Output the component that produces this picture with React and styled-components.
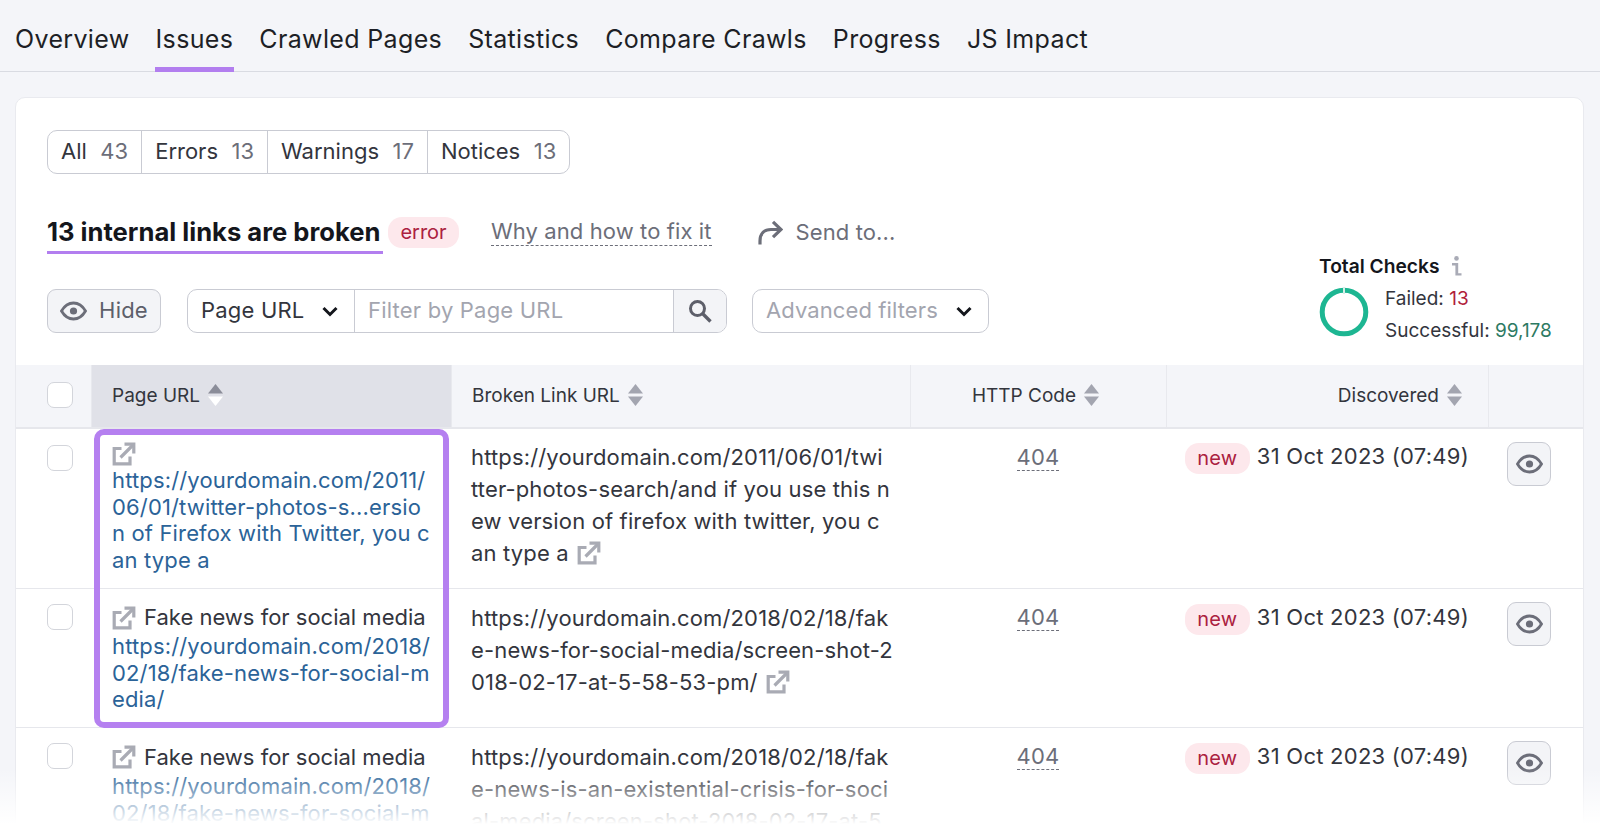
import React from 'react';
import styled, { createGlobalStyle } from 'styled-components';

const Global = createGlobalStyle`
  html, body { margin: 0; padding: 0; background: #f4f5f9; }
  * { box-sizing: border-box; }
  body { font-family: Inter, "Liberation Sans", sans-serif; color: #1d1f26; }
`;

const Page = styled.div`
  position: relative;
  width: 1600px;
  height: 840px;
  overflow: hidden;
  background: #f4f5f9;
`;
const TabBar = styled.nav`
  height: 72px;
  display: flex;
  gap: 24px;
  padding-left: 14px;
  border-bottom: 1px solid #d9dbe2;
`;
const Tab = styled.div`
  height: 72px;
  padding: 24px 1px 0;
  font-size: 25px;
  line-height: 30px;
  letter-spacing: 0.35px;
  border-bottom: 5px solid ${p => (p.$active ? '#b27eef' : 'transparent')};
`;
const Card = styled.main`
  margin: 25px 16px 0 15px;
  height: 760px;
  background: #fff;
  border: 1px solid #e9eaef;
  border-radius: 10px 10px 0 0;
`;
const Segments = styled.div`
  display: inline-flex;
  margin: 32px 0 0 31px;
  height: 44px;
  border: 1px solid #c9cbd3;
  border-radius: 10px;
`;
const Segment = styled.div`
  display: flex;
  align-items: center;
  gap: 13.5px;
  padding: 0 13px 2px;
  font-size: 22px;
  color: #33353d;
  & + & { border-left: 1px solid #c9cbd3; }
`;
const Count = styled.span`
  color: #6c6e79;
`;
const Head = styled.div`
  display: flex;
  justify-content: space-between;
  align-items: flex-end;
  padding: 0 31px;
`;
const TitleRow = styled.div`
  display: flex;
  align-items: center;
  margin-top: 36px;
  height: 44px;
`;
const Title = styled.h1`
  margin: 0;
  height: 43px;
  padding-top: 5px;
  width: 336px;
  font-size: 25.6px;
  line-height: 31px;
  font-weight: 700;
  white-space: nowrap;
  color: #14161c;
  border-bottom: 3px solid #b27eef;
`;
const Badge = styled.span`
  display: inline-flex;
  align-items: center;
  justify-content: center;
  width: ${p => p.$w}px;
  height: 31px;
  margin-top: ${p => p.$top || 0}px;
  margin-left: ${p => p.$left || 0}px;
  border-radius: 14px;
  background: #fde8ec;
  color: #ab2140;
  font-size: 20px;
  flex: none;
`;
const FixLink = styled.a`
  margin-left: 32px;
  font-size: 22px;
  letter-spacing: 0.1px;
  color: #6c6e79;
  border-bottom: 1px dashed #6c6e79;
  line-height: 27px;
`;
const SendTo = styled.div`
  display: flex;
  align-items: center;
  gap: 13px;
  margin-left: 46px;
  font-size: 22px;
  letter-spacing: 0.1px;
  color: #6c6e79;
`;
const FilterRow = styled.div`
  display: flex;
  margin-top: 35px;
  height: 44px;
`;
const GreyButton = styled.button`
  display: flex;
  align-items: center;
  justify-content: center;
  gap: 12px;
  padding: 0;
  width: ${p => p.$w}px;
  height: 44px;
  background: #f3f4f7;
  border: 1px solid #c9cbd3;
  border-radius: 9px;
  font: inherit;
  font-size: 22px;
  letter-spacing: 0.2px;
  color: #5d5f6a;
`;
const ButtonLabel = styled.span`
  margin-bottom: 2px;
`;
const FilterGroup = styled.div`
  display: flex;
  margin-left: 26px;
  width: 540px;
  height: 44px;
  border: 1px solid #c9cbd3;
  border-radius: 10px;
  overflow: hidden;
`;
const SelectPart = styled.div`
  display: flex;
  align-items: center;
  justify-content: space-between;
  width: 167px;
  padding: 0 16px 2px 13px;
  font-size: 22px;
  letter-spacing: 0.2px;
  color: #33353d;
  border-right: 1px solid #c9cbd3;
`;
const InputPart = styled.div`
  flex: 1;
  display: flex;
  align-items: center;
  padding: 0 0 2px 13px;
  font-size: 22px;
  letter-spacing: 0.2px;
  color: #a3a5af;
`;
const SearchPart = styled.div`
  width: 53px;
  display: flex;
  align-items: center;
  justify-content: center;
  background: #f3f4f7;
  border-left: 1px solid #c9cbd3;
`;
const Advanced = styled.div`
  display: flex;
  align-items: center;
  justify-content: space-between;
  margin-left: 25px;
  width: 237px;
  height: 44px;
  padding: 0 16px 2px 13px;
  border: 1px solid #c9cbd3;
  border-radius: 10px;
  font-size: 22px;
  letter-spacing: 0.1px;
  color: #a3a5af;
`;
const Checks = styled.aside`
  width: 233px;
  margin-bottom: -14px;
`;
const ChecksTitle = styled.div`
  display: flex;
  align-items: center;
  gap: 12px;
  font-size: 19.2px;
  line-height: 24px;
  font-weight: 600;
  color: #14161c;
`;
const ChecksBody = styled.div`
  display: flex;
  align-items: center;
  gap: 16px;
  margin-top: 5px;
`;
const CheckLine = styled.div`
  font-size: 19px;
  line-height: 32px;
  white-space: nowrap;
  color: #33353d;
`;
const Num = styled.span`
  color: ${p => p.$c};
`;
const Table = styled.section`
  margin-top: 32px;
`;
const cols = '75px 360px 459px 256px 322px 1fr';
const HeadRow = styled.div`
  display: grid;
  grid-template-columns: ${cols};
  height: 64px;
  background: #f4f5f9;
  border-bottom: 2px solid #e6e7ec;
`;
const HeadCell = styled.div`
  display: flex;
  align-items: center;
  justify-content: ${p => p.$justify || 'flex-start'};
  gap: 8px;
  padding: ${p => p.$pad || '0'};
  font-size: 19px;
  color: #33353d;
  background: ${p => (p.$sorted ? '#e0e1e8' : 'transparent')};
  & + & { border-left: ${p => (p.$sorted ? 'none' : '1px solid #e8e9ee')}; }
`;
const Check = styled.span`
  display: block;
  width: 26px;
  height: 26px;
  background: #fff;
  border: 1px solid #d3d5db;
  border-radius: 7px;
`;
const Row = styled.div`
  display: grid;
  grid-template-columns: ${cols};
  height: ${p => p.$h}px;
  & + & { border-top: 1px solid #e6e7ec; }
`;
const CheckCell = styled.div`
  padding: ${p => p.$top}px 0 0 31px;
`;
const PageCell = styled.div`
  padding: ${p => p.$top}px 20px 0 21px;
  font-size: 22px;
  line-height: 26.5px;
  letter-spacing: 0.15px;
`;
const PageTitle = styled.div`
  display: flex;
  align-items: center;
  gap: 8px;
  height: ${p => p.$h}px;
  white-space: nowrap;
  letter-spacing: 0;
  color: #33353d;
`;
const LinkText = styled.a`
  display: block;
  color: #2b6398;
  word-break: break-all;
`;
const BrokenCell = styled.div`
  padding: ${p => p.$top}px 0 0 20px;
  font-size: 22px;
  line-height: 32px;
  letter-spacing: 0.15px;
  color: #33353d;
  white-space: pre;
  svg { margin-left: 8px; vertical-align: -4px; }
`;
const CodeCell = styled.div`
  padding-top: ${p => p.$top}px;
  display: flex;
  justify-content: center;
  align-items: flex-start;
  font-size: 22px;
  line-height: 26px;
  letter-spacing: 0.2px;
  color: #6c6e79;
  span { border-bottom: 1px dashed #6c6e79; }
`;
const DateCell = styled.div`
  display: flex;
  justify-content: flex-end;
  align-items: flex-start;
  gap: 7px;
  padding: ${p => p.$top}px 19px 0 0;
  font-size: 22px;
  line-height: 31px;
  letter-spacing: 0.25px;
  color: #33353d;
  white-space: nowrap;
`;
const ActionCell = styled.div`
  padding: ${p => p.$top}px 0 0 19px;
`;
const Highlight = styled.div`
  position: absolute;
  left: 94px;
  top: 429px;
  width: 355px;
  height: 299px;
  border: 6px solid #b580f0;
  border-radius: 10px;
  pointer-events: none;
`;
const Fade = styled.div`
  position: absolute;
  left: 0;
  right: 0;
  bottom: 0;
  height: 72px;
  background: linear-gradient(to bottom, rgba(255,255,255,0), #fff 78%);
  pointer-events: none;
`;

const ExtIcon = ({ size = 24 }) => (
  <svg width={size} height={size} viewBox="0 0 24 24" fill="none" stroke="#a9abb4" strokeWidth="3.2" style={{ flex: 'none' }}>
    <path d="M9.5 6.5H2.2v15.3H18V14.5" />
    <path d="M8.5 15.5L21 3" />
    <path d="M12.5 2.2h9.3v9.3" />
  </svg>
);
const EyeIcon = () => (
  <svg width="27" height="20" viewBox="0 0 27 20" fill="none" style={{ flex: 'none' }}>
    <path d="M1.5 10C4.5 4.8 8.5 2 13.5 2s9 2.8 12 8c-3 5.2-7 8-12 8s-9-2.8-12-8z" stroke="#6c6e79" strokeWidth="2.8" />
    <circle cx="13.5" cy="10" r="3.6" fill="#6c6e79" />
  </svg>
);
const Chevron = () => (
  <svg width="16" height="11" viewBox="0 0 16 11" fill="none" stroke="#14161c" strokeWidth="3" style={{ flex: 'none', marginTop: 2 }}>
    <path d="M1.5 2l6.5 6.5L14.5 2" />
  </svg>
);
const SortIcon = ({ up = '#a3a5b0', down = '#a3a5b0' }) => (
  <svg width="15" height="22" viewBox="0 0 15 22" style={{ flex: 'none' }}>
    <path d="M7.5 0l7.5 9.5H0z" fill={up} />
    <path d="M7.5 22l7.5-9.5H0z" fill={down} />
  </svg>
);
const SearchIcon = () => (
  <svg width="24" height="24" viewBox="0 0 24 24" fill="none" stroke="#5d5f6a" strokeWidth="3">
    <circle cx="9.5" cy="9.5" r="7" />
    <path d="M14.5 14.5l8 8" strokeWidth="3.4" />
  </svg>
);
const SendIcon = () => (
  <svg width="25" height="25" viewBox="0 0 25 25" fill="none" stroke="#6c6e79" strokeWidth="3.2" style={{ flex: 'none' }}>
    <path d="M2 24.5v-3.5c0-7 4-11.5 11-11.5H22.5" />
    <path d="M15 1.8l8 7.7-8 7.7" />
  </svg>
);
const InfoIcon = () => (
  <svg width="11" height="20" viewBox="0 0 11 20" fill="#a9abb6" style={{ flex: 'none' }}>
    <circle cx="5.5" cy="2.4" r="2.3" />
    <path d="M1 7h6.2v10.2H10.5V19.6H4.4V9.4H1z" />
  </svg>
);
const Ring = () => (
  <svg width="50" height="50" viewBox="0 0 50 50" fill="none" style={{ flex: 'none', marginBottom: 6 }}>
    <circle cx="25" cy="25" r="21.8" stroke="#1db692" strokeWidth="5" />
    <path d="M25 1v6" stroke="#d6efe8" strokeWidth="2" />
  </svg>
);

const tabs = ['Overview', 'Issues', 'Crawled Pages', 'Statistics', 'Compare Crawls', 'Progress', 'JS Impact'];
const segments = [['All', 43], ['Errors', 13], ['Warnings', 17], ['Notices', 13]];
const rows = [
  {
    h: 159, check: 16, pageTop: 12, code: 15, date: 12, action: 13, brokenTop: 12, titleH: 26,
    title: null,
    link: 'https://yourdomain.com/2011/06/01/twitter-photos-s...ersion of Firefox with Twitter, you can type a',
    broken: 'https://yourdomain.com/2011/06/01/twi\ntter-photos-search/and if you use this n\new version of firefox with twitter, you c\nan type a',
    icon: true,
  },
  {
    h: 139, check: 15, pageTop: 13, code: 15, date: 13, action: 13, brokenTop: 13, titleH: 31,
    title: 'Fake news for social media',
    link: 'https://yourdomain.com/2018/02/18/fake-news-for-social-media/',
    broken: 'https://yourdomain.com/2018/02/18/fak\ne-news-for-social-media/screen-shot-2\n018-02-17-at-5-58-53-pm/',
    icon: true,
  },
  {
    h: 140, check: 15, pageTop: 13, code: 15, date: 13, action: 13, brokenTop: 13, titleH: 32,
    title: 'Fake news for social media',
    link: 'https://yourdomain.com/2018/02/18/fake-news-for-social-m',
    broken: 'https://yourdomain.com/2018/02/18/fak\ne-news-is-an-existential-crisis-for-soci\nal-media/screen-shot-2018-02-17-at-5',
    icon: false,
  },
];

export default function App() {
  return (
    <Page>
      <Global />
      <TabBar>
        {tabs.map(t => <Tab key={t} $active={t === 'Issues'}>{t}</Tab>)}
      </TabBar>
      <Card>
        <Segments>
          {segments.map(([n, c]) => <Segment key={n}>{n}<Count>{c}</Count></Segment>)}
        </Segments>
        <Head>
          <div>
            <TitleRow>
              <Title>13 internal links are broken</Title>
              <Badge $w={71} $left={5}>error</Badge>
              <FixLink>Why and how to fix it</FixLink>
              <SendTo><SendIcon />Send to...</SendTo>
            </TitleRow>
            <FilterRow>
              <GreyButton $w={114}><EyeIcon /><ButtonLabel>Hide</ButtonLabel></GreyButton>
              <FilterGroup>
                <SelectPart>Page URL<Chevron /></SelectPart>
                <InputPart>Filter by Page URL</InputPart>
                <SearchPart><SearchIcon /></SearchPart>
              </FilterGroup>
              <Advanced>Advanced filters<Chevron /></Advanced>
            </FilterRow>
          </div>
          <Checks>
            <ChecksTitle>Total Checks<InfoIcon /></ChecksTitle>
            <ChecksBody>
              <Ring />
              <div>
                <CheckLine>Failed: <Num $c="#b0203a">13</Num></CheckLine>
                <CheckLine>Successful: <Num $c="#2d7a63">99,178</Num></CheckLine>
              </div>
            </ChecksBody>
          </Checks>
        </Head>
        <Table>
          <HeadRow>
            <HeadCell $pad="0 0 2px 31px"><Check /></HeadCell>
            <HeadCell $sorted $pad="0 0 2px 20px">Page URL<SortIcon up="#8b8d99" down="#fff" /></HeadCell>
            <HeadCell $pad="0 0 2px 20px">Broken Link URL<SortIcon /></HeadCell>
            <HeadCell $justify="center" $pad="0 6px 2px 0">HTTP Code<SortIcon /></HeadCell>
            <HeadCell $justify="flex-end" $pad="0 26px 2px 0">Discovered<SortIcon /></HeadCell>
            <HeadCell />
          </HeadRow>
          {rows.map((r, i) => (
            <Row key={i} $h={r.h}>
              <CheckCell $top={r.check}><Check /></CheckCell>
              <PageCell $top={r.pageTop}>
                <PageTitle $h={r.titleH}><ExtIcon />{r.title}</PageTitle>
                <LinkText>{r.link}</LinkText>
              </PageCell>
              <BrokenCell $top={r.brokenTop}>{r.broken}{r.icon && <ExtIcon />}</BrokenCell>
              <CodeCell $top={r.code}><span>404</span></CodeCell>
              <DateCell $top={r.date}><Badge $w={65} $top={2}>new</Badge>31 Oct 2023 (07:49)</DateCell>
              <ActionCell $top={r.action}><GreyButton $w={44}><EyeIcon /></GreyButton></ActionCell>
            </Row>
          ))}
        </Table>
      </Card>
      <Highlight />
      <Fade />
    </Page>
  );
}
